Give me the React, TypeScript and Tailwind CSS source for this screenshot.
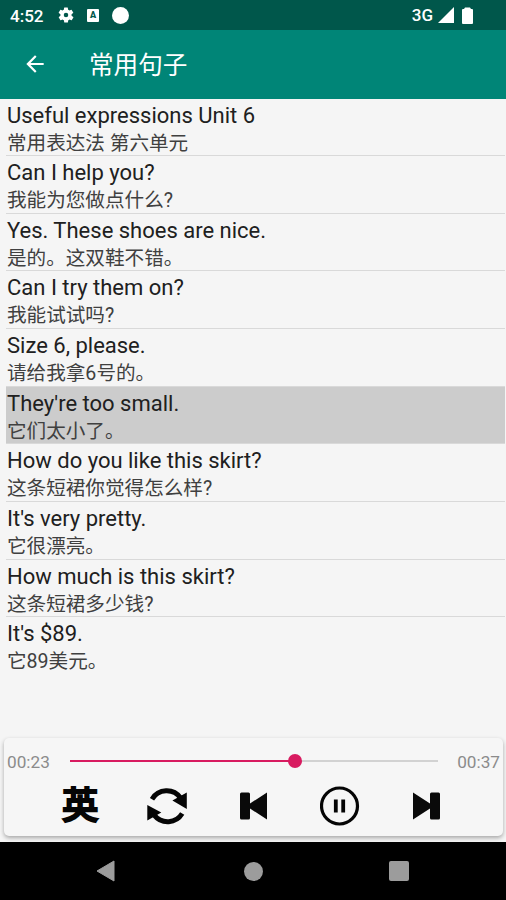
import { useState } from "react";

const sentences = [
  { en: "Useful expressions Unit 6", zh: "常用表达法 第六单元" },
  { en: "Can I help you?", zh: "我能为您做点什么?" },
  { en: "Yes. These shoes are nice.", zh: "是的。这双鞋不错。" },
  { en: "Can I try them on?", zh: "我能试试吗?" },
  { en: "Size 6, please.", zh: "请给我拿6号的。" },
  { en: "They're too small.", zh: "它们太小了。" },
  { en: "How do you like this skirt?", zh: "这条短裙你觉得怎么样?" },
  { en: "It's very pretty.", zh: "它很漂亮。" },
  { en: "How much is this skirt?", zh: "这条短裙多少钱?" },
  { en: "It's $89.", zh: "它89美元。" },
];

function StatusBar() {
  return (
    <div className="flex h-[30px] items-center bg-[#00574b] pl-[10px] pr-[33px] text-white">
      <span className="w-[47px] pt-[2px] text-[17px] leading-none font-medium">4:52</span>
      <svg className="h-[18px] w-[18px]" viewBox="0 0 24 24" fill="currentColor">
        <path d="M19.4 13a7.8 7.8 0 0 0 0-2l2.1-1.6a.5.5 0 0 0 .1-.7l-2-3.4a.5.5 0 0 0-.6-.2l-2.5 1a7.3 7.3 0 0 0-1.7-1l-.4-2.7A.5.5 0 0 0 14 2h-4a.5.5 0 0 0-.5.4l-.4 2.7a7.7 7.7 0 0 0-1.7 1l-2.5-1a.5.5 0 0 0-.6.2l-2 3.4a.5.5 0 0 0 .1.7L4.6 11a7.9 7.9 0 0 0 0 2l-2.1 1.6a.5.5 0 0 0-.1.7l2 3.4c.1.2.4.3.6.2l2.5-1c.5.4 1.1.8 1.7 1l.4 2.7c0 .2.2.4.5.4h4c.2 0 .5-.2.5-.4l.4-2.7c.6-.3 1.2-.6 1.7-1l2.5 1c.2.1.5 0 .6-.2l2-3.4a.5.5 0 0 0-.1-.7zM12 15a3 3 0 1 1 0-6 3 3 0 0 1 0 6z" />
      </svg>
      <span className="ml-[12px] flex h-[13px] w-[12px] items-center justify-center rounded-[1px] bg-white text-[9px] leading-none font-black text-[#00574b]">
        A
      </span>
      <span className="ml-[13px] h-[17px] w-[17px] rounded-full bg-white" />
      <span className="ml-auto text-[17px] leading-none font-medium">3G</span>
      <svg className="ml-[5px] h-[16px] w-[16px]" viewBox="0 0 16 16" fill="currentColor">
        <path d="M16 0v16H0z" />
      </svg>
      <svg className="ml-[8px] h-[17px] w-[11px]" viewBox="0 0 11 17" fill="currentColor">
        <path d="M3 .5h5L9 2h1q1 0 1 1v13q0 1-1 1H1q-1 0-1-1V3q0-1 1-1h1z" />
      </svg>
    </div>
  );
}

function RepeatIcon() {
  return (
    <svg className="h-[40px] w-[40px]" viewBox="0 0 40 40">
      <g fill="none" stroke="#050505" strokeWidth="4.9">
        <path d="M5 13.2A17 17 0 0 1 33.6 12" />
        <path d="M35.2 27.6A17 17 0 0 1 7.4 29.4" />
      </g>
      <path d="M25.4 14.6 39.8 6.6v16.4zM.3 19v15.4l14-7.8z" fill="#050505" />
    </svg>
  );
}

function SkipIcon({ className = "" }: { className?: string }) {
  return (
    <svg className={`h-[28px] w-[27px] ${className}`} viewBox="0 0 27 28" fill="#0a0a0a">
      <path d="M0 .5 17 11.5V2Q17 .5 18.5.5h7Q27 .5 27 2v24q0 1.5-1.5 1.5h-7Q17 27.5 17 26v-9.5L0 27.5z" />
    </svg>
  );
}

function Player() {
  const [playing, setPlaying] = useState(true);
  const progress = 61.1;

  return (
    <div className="mr-[3px] ml-[4px] h-[98px] rounded-[5px] bg-[#f6f6f6] shadow-[0_2px_4px_rgba(0,0,0,0.32)]">
      <div className="flex h-[46px] items-center pr-[3px] pl-[3px] text-[17.2px] text-[#8b8b8b]">
        <span className="w-[63px] pt-[3px]">00:23</span>
        <div className="relative h-[2px] w-[368px] bg-[#d2d2d2]">
          <div className="h-full bg-[#d81b60]" style={{ width: `${progress}%` }} />
          <span
            className="absolute top-[-6px] h-[14px] w-[14px] -translate-x-1/2 rounded-full bg-[#d81b60]"
            style={{ left: `${progress}%` }}
          />
        </div>
        <span className="ml-auto pt-[3px]">00:37</span>
      </div>
      <div className="flex h-[43px] items-center pl-[33px]">
        <button className="w-[86.5px] pt-[3px] text-[37px] leading-[40px] font-medium text-[#050505] [-webkit-text-stroke:1.8px_#050505] [stroke-linejoin:round]">
          英
        </button>
        <button className="flex w-[86.5px] justify-center">
          <RepeatIcon />
        </button>
        <button className="flex w-[86.5px] justify-center">
          <SkipIcon className="rotate-180" />
        </button>
        <button className="flex w-[86.5px] justify-center" onClick={() => setPlaying(!playing)}>
          <svg className="h-[40px] w-[40px]" viewBox="0 0 40 40">
            <circle cx="19.5" cy="20" r="18" fill="none" stroke="#050505" strokeWidth="3.2" />
            {playing ? (
              <path d="M15.8 13.5v13M23.2 13.5v13" stroke="#050505" strokeWidth="3.8" />
            ) : (
              <path d="M15 12v16l12-8z" fill="#050505" />
            )}
          </svg>
        </button>
        <button className="flex w-[86.5px] justify-center">
          <SkipIcon />
        </button>
      </div>
    </div>
  );
}

export default function App() {
  const [current, setCurrent] = useState(5);

  return (
    <div className="flex h-[900px] w-[506px] flex-col overflow-hidden bg-[#f5f5f5] font-[Roboto,'Noto_Sans_CJK_SC',sans-serif]">
      <StatusBar />
      <header className="flex h-[68.5px] shrink-0 items-center bg-[#008577] pl-[22px] text-white">
        <svg className="h-[26px] w-[26px]" viewBox="0 0 24 24" fill="currentColor">
          <path d="M20 11H7.83l5.59-5.59L12 4l-8 8 8 8 1.41-1.41L7.83 13H20v-2z" />
        </svg>
        <h1 className="ml-[41px] pt-[4px] text-[24.6px] leading-none font-normal">常用句子</h1>
      </header>

      <ul className="flex-1 pr-[1px] pl-[6px]">
        {sentences.map((s, i) => (
          <li
            key={s.en}
            onClick={() => setCurrent(i)}
            className={`h-[57.65px] pl-[1px] whitespace-nowrap text-[#202020] ${
              i < sentences.length - 1 ? "border-b border-[#d9d9d9]" : ""
            } ${i === current ? "bg-[#cccccc]" : ""}`}
          >
            <div className="h-[30px] pt-[3px] text-[22px] leading-[27px]">{s.en}</div>
            <div className="h-[26px] pt-px text-[19.6px] leading-[27px] text-[#404040]">{s.zh}</div>
          </li>
        ))}
      </ul>

      <Player />

      <nav className="mt-[6px] flex h-[58px] shrink-0 items-center bg-black pl-[96px] text-[#9c9c9c]">
        <svg className="h-[22px] w-[19px]" viewBox="0 0 19 22" fill="currentColor">
          <path d="M18 1v20L1 11z" stroke="currentColor" strokeLinejoin="round" />
        </svg>
        <span className="ml-[129px] h-[19px] w-[19px] rounded-full bg-[#9c9c9c]" />
        <span className="ml-[126px] h-[20px] w-[20px] rounded-[2px] bg-[#9c9c9c]" />
      </nav>
    </div>
  );
}
